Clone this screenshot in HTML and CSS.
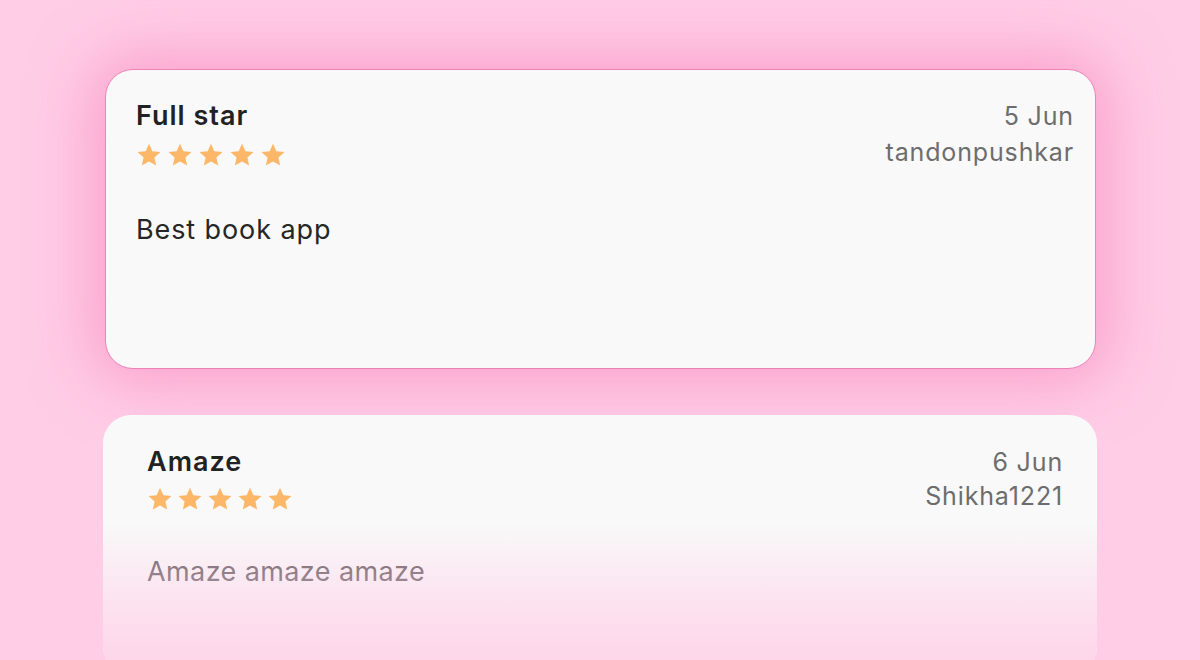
FILE: index.html
```html
<!DOCTYPE html>
<html>
<head>
<meta charset="utf-8">
<link rel="stylesheet" href="styles.css">
</head>
<body>
<svg width="0" height="0" class="defs">
  <defs>
    <symbol id="star" viewBox="0 0 24 24">
      <path d="M12 1.6l3.1 6.9 7.5.8-5.6 5.1 1.6 7.4L12 18l-6.6 3.8L7 14.4 1.4 9.3l7.5-.8z" fill="#fdb768"/>
    </symbol>
  </defs>
</svg>
<main class="list">
  <section class="card card-active">
    <div class="head">
      <div class="left">
        <div class="title">Full star</div>
        <div class="stars">
          <svg class="star"><use href="#star"/></svg>
          <svg class="star"><use href="#star"/></svg>
          <svg class="star"><use href="#star"/></svg>
          <svg class="star"><use href="#star"/></svg>
          <svg class="star"><use href="#star"/></svg>
        </div>
      </div>
      <div class="meta">
        <div class="date">5 Jun</div>
        <div class="user">tandonpushkar</div>
      </div>
    </div>
    <p class="body">Best book app</p>
  </section>
  <section class="card card-next">
    <div class="head">
      <div class="left">
        <div class="title">Amaze</div>
        <div class="stars">
          <svg class="star"><use href="#star"/></svg>
          <svg class="star"><use href="#star"/></svg>
          <svg class="star"><use href="#star"/></svg>
          <svg class="star"><use href="#star"/></svg>
          <svg class="star"><use href="#star"/></svg>
        </div>
      </div>
      <div class="meta">
        <div class="date">6 Jun</div>
        <div class="user">Shikha1221</div>
      </div>
    </div>
    <p class="body faded">Amaze amaze amaze</p>
  </section>
</main>
</body>
</html>
```
FILE: styles.css
```css
* { box-sizing: border-box; }
html, body {
  margin: 0;
  height: 660px;
  overflow: hidden;
}
body {
  background: #ffcde6;
  font-family: Inter, "Noto Sans", sans-serif;
}
.defs { position: absolute; }
.list {
  display: flex;
  flex-direction: column;
  gap: 46px;
  padding-top: 69px;
}
.card {
  background: #f9f9f9;
  border-radius: 28px;
  position: relative;
}
.card-active {
  margin: 0 104px 0 105px;
  height: 300px;
  border: 1px solid #f080b6;
  padding: 30px 21px 0 30px;
  box-shadow: 0 0 60px 14px rgba(246, 130, 186, 0.58);
}
.card-next {
  margin: 0 103px;
  height: 260px;
  padding: 31px 34px 0 44px;
}
.card-next::after {
  content: "";
  position: absolute;
  left: 0; right: 0; top: 0; bottom: 0;
  border-radius: 28px;
  background: linear-gradient(to bottom, rgba(255, 205, 230, 0) 108px, rgba(255, 205, 230, 0.5) 185px, rgba(255, 205, 230, 0.8) 245px);
  pointer-events: none;
}
.head {
  display: flex;
  justify-content: space-between;
  align-items: flex-start;
}
.title {
  font-size: 27px;
  line-height: 32px;
  font-weight: 600;
  color: #222;
  letter-spacing: 1px;
}
.stars {
  display: flex;
  gap: 5px;
  margin-top: 10px;
}
.star {
  width: 26px;
  height: 26px;
}
.card-next .stars { margin-top: 8px; gap: 4px; }
.meta {
  text-align: right;
  color: #6d6d6d;
  font-size: 25px;
  line-height: 36px;
  letter-spacing: 0.85px;
  margin-top: -2px;
}
.card-next .meta { line-height: 34px; margin-top: -1px; }
.body {
  margin: 44px 0 0;
  font-size: 27px;
  line-height: 32px;
  color: #262626;
  letter-spacing: 0.9px;
}
.card-next .body { margin-top: 43px; letter-spacing: 0.4px; }
.faded { color: #5e5a5c; }
```
